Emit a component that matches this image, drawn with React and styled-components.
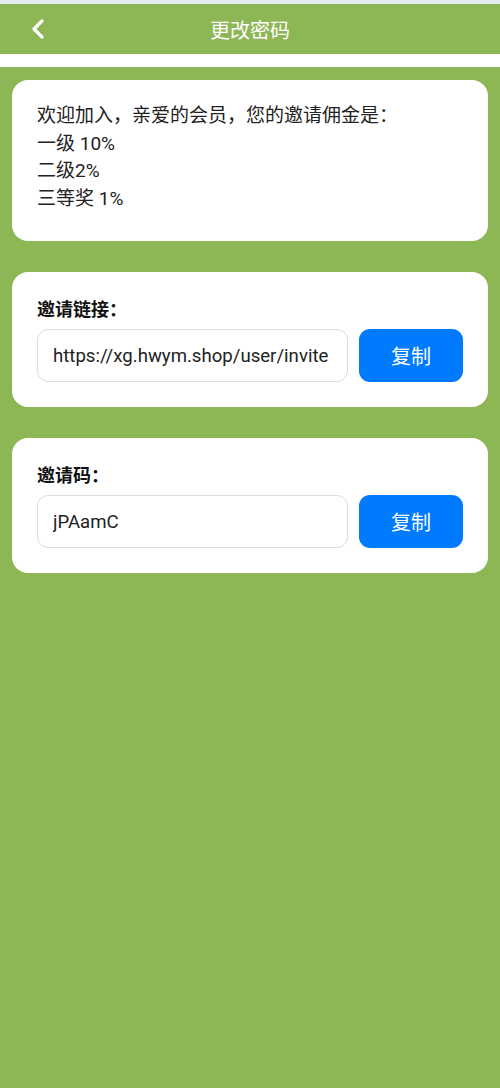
import React from 'react'
import styled, { createGlobalStyle } from 'styled-components'

const GlobalStyle = createGlobalStyle`
  html, body {
    margin: 0;
    padding: 0;
    background: #8db655;
  }
  body {
    font-family: Roboto, "Noto Sans CJK SC", "Liberation Sans", sans-serif;
    color: #222;
  }
`

const Page = styled.div`
  min-height: 1088px;
  background: #8db655;
  border-top: 4px solid #e7eaee;
`

const Header = styled.header`
  height: 50px;
  display: flex;
  align-items: center;
  justify-content: center;
  position: relative;
  background: #8db655;
  border-bottom: 13px solid #fff;
`

const Back = styled.button`
  position: absolute;
  left: 26px;
  top: 12px;
  width: 24px;
  height: 26px;
  padding: 0;
  border: 0;
  background: none;
  display: flex;
  align-items: center;
  justify-content: center;
`

const Title = styled.h1`
  margin: 0;
  font-size: 20px;
  font-weight: 400;
  color: #fff;
`

const Body = styled.main`
  padding: 13px 12px;
  display: flex;
  flex-direction: column;
  gap: 31px;
`

const Card = styled.section`
  background: #fff;
  border-radius: 16px;
  padding: ${p => p.$pad || '27px 25px 25px'};
`

const Info = styled.p`
  margin: 0;
  font-size: 19px;
  line-height: 27.5px;
  color: #222;
`

const Label = styled.div`
  font-size: 18px;
  font-weight: 700;
  line-height: 22px;
  color: #111;
  margin-bottom: 8px;
`

const Row = styled.div`
  display: flex;
  gap: 11px;
`

const Field = styled.input`
  flex: 1;
  min-width: 0;
  height: 53px;
  box-sizing: border-box;
  border: 1px solid #dcdcdc;
  border-radius: 11px;
  padding: 0 8px 0 15px;
  font-family: Roboto, "Noto Sans CJK SC", sans-serif;
  font-size: 18.6px;
  color: #222;
  outline: none;
`

const CopyButton = styled.button`
  width: 104px;
  height: 53px;
  flex-shrink: 0;
  border: 0;
  border-radius: 11px;
  background: #007bff;
  color: #fff;
  font-family: Roboto, "Noto Sans CJK SC", sans-serif;
  font-size: 20px;
  cursor: pointer;
`

function CopyCard({ label, value }) {
  return (
    <Card>
      <Label>{label}</Label>
      <Row>
        <Field value={value} readOnly />
        <CopyButton>复制</CopyButton>
      </Row>
    </Card>
  )
}

export default function App() {
  return (
    <Page>
      <GlobalStyle />
      <Header>
        <Back aria-label="返回">
          <svg width="14" height="20" viewBox="0 0 14 20">
            <path d="M11 2 L3 10 L11 18" fill="none" stroke="#fff" strokeWidth="3.2" strokeLinecap="round" strokeLinejoin="round" />
          </svg>
        </Back>
        <Title>更改密码</Title>
      </Header>
      <Body>
        <Card $pad="22px 25px 29px">
          <Info>
            欢迎加入，亲爱的会员，您的邀请佣金是：<br />
            一级 10%<br />
            二级2%<br />
            三等奖 1%
          </Info>
        </Card>
        <CopyCard label="邀请链接：" value="https://xg.hwym.shop/user/invite" />
        <CopyCard label="邀请码：" value="jPAamC" />
      </Body>
    </Page>
  )
}
